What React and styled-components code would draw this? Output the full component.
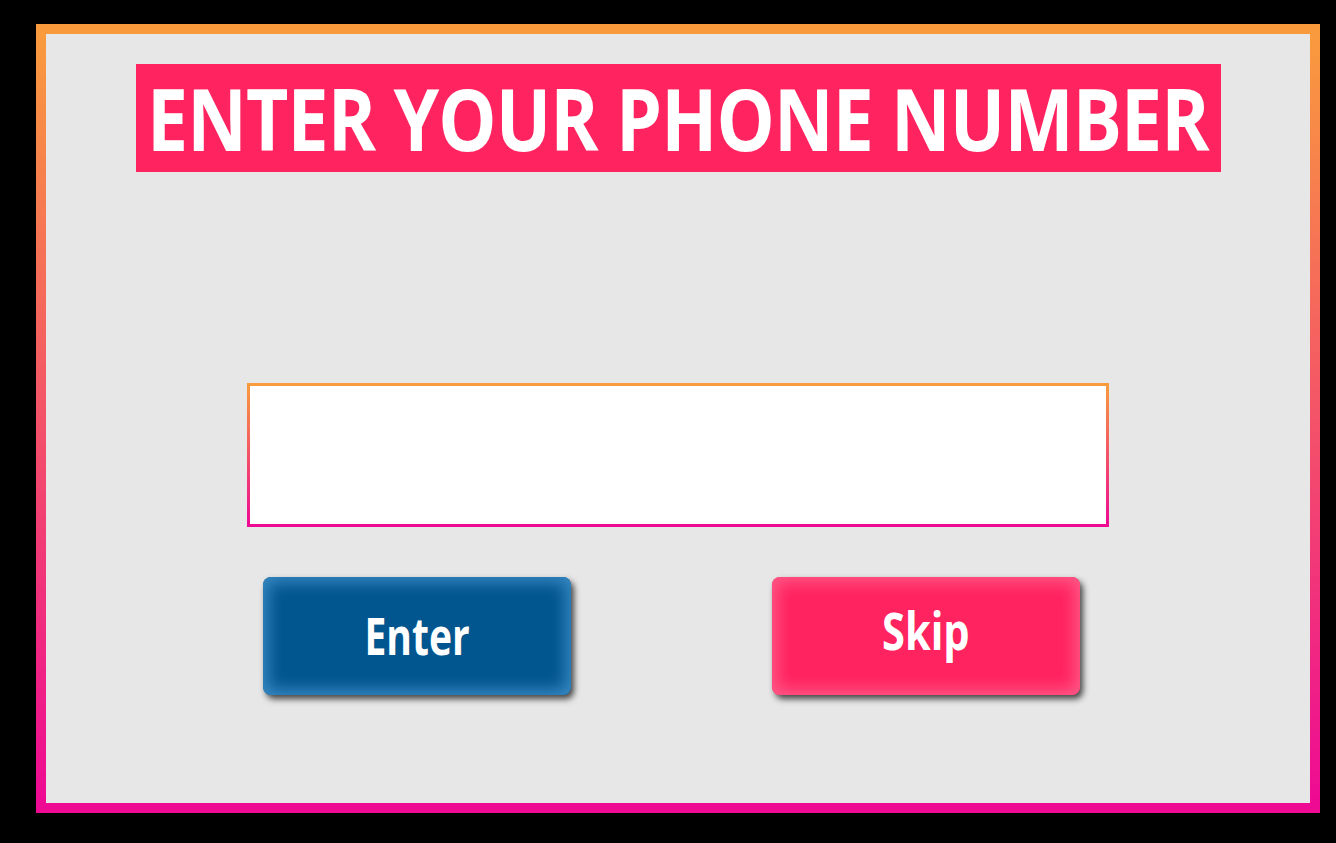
import React, { useLayoutEffect, useRef, useState } from "react";
import styled, { createGlobalStyle } from "styled-components";

const Global = createGlobalStyle`
  html, body { margin: 0; padding: 0; background: #000; }
  body { width: 1336px; height: 843px; overflow: hidden; font-family: "Open Sans", "Noto Sans", sans-serif; }
`;

const Frame = styled.div`
  box-sizing: border-box;
  margin: 24px 0 0 36px;
  width: 1284px;
  height: 789px;
  border: 10px solid;
  border-image: linear-gradient(180deg, #f99b3d 0%, #ee0a93 100%) 1;
  background: #e7e7e7;
  display: flex;
  flex-direction: column;
  align-items: center;
  padding-top: 30px;
`;

const Title = styled.h1`
  margin: 0;
  width: 1085px;
  height: 108px;
  background: #ff2360;
  color: #fff;
  font-family: "Open Sans", "Noto Sans", sans-serif;
  font-weight: 700;
  font-size: 86px;
  line-height: 108px;
  display: flex;
  justify-content: center;
  align-items: center;
  white-space: nowrap;
  letter-spacing: -1px;
`;

const Squeeze = styled.span`
  display: inline-block;
  flex: none;
  white-space: nowrap;
  transform-origin: center center;
`;

function FitText({ width, children }) {
  const ref = useRef(null);
  const [fit, setFit] = useState({ scale: 1, margin: 0 });
  useLayoutEffect(() => {
    if (ref.current) {
      const w = ref.current.offsetWidth;
      if (w > 0) setFit({ scale: width / w, margin: (width - w) / 2 });
    }
  }, [width]);
  return (
    <Squeeze
      ref={ref}
      style={{
        transform: `scaleX(${fit.scale})`,
        marginLeft: fit.margin,
        marginRight: fit.margin,
      }}
    >
      {children}
    </Squeeze>
  );
}

const PhoneInput = styled.input`
  box-sizing: border-box;
  margin-top: 211px;
  width: 862px;
  height: 144px;
  border: 3px solid;
  border-image: linear-gradient(180deg, #f99b3d 0%, #ee0a93 100%) 1;
  background: #fff;
  outline: none;
  font-family: "Open Sans", sans-serif;
  font-size: 40px;
  padding: 0 20px;
`;

const ButtonRow = styled.div`
  align-self: stretch;
  display: flex;
  gap: 201px;
  margin-top: 50px;
  padding-left: 217px;
`;

const ActionButton = styled.button`
  width: 308px;
  height: 118px;
  border: none;
  border-radius: 8px;
  background: ${(p) => p.$bg};
  box-shadow: inset 0 0 16px 5px ${(p) => p.$glow}, 3px 4px 6px rgba(0, 0, 0, 0.7);
  color: #fff;
  font-family: "Open Sans", "Noto Sans", sans-serif;
  font-weight: 700;
  font-size: 52px;
  line-height: 1;
  display: flex;
  justify-content: center;
  align-items: center;
  padding: 0 0 ${(p) => p.$lift}px 0;
  cursor: pointer;
`;

export default function App() {
  return (
    <>
      <Global />
      <Frame>
        <Title>
          <FitText width={1062}>ENTER YOUR PHONE NUMBER</FitText>
        </Title>
        <PhoneInput type="tel" />
        <ButtonRow>
          <ActionButton $bg="#02568f" $glow="#3b8ac4" $lift={2}>
            <FitText width={105}>Enter</FitText>
          </ActionButton>
          <ActionButton $bg="#ff2360" $glow="#ff5a88" $lift={12}>
            <FitText width={88}>Skip</FitText>
          </ActionButton>
        </ButtonRow>
      </Frame>
    </>
  );
}
